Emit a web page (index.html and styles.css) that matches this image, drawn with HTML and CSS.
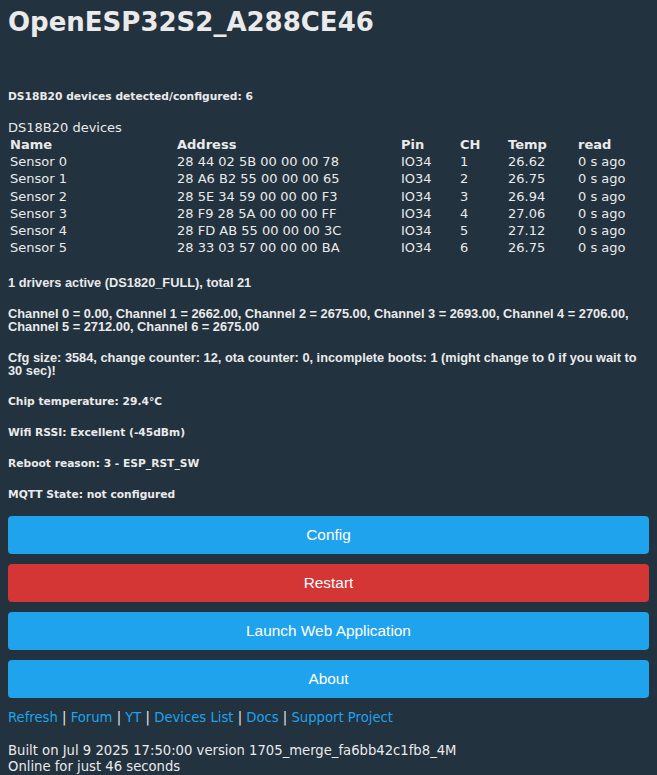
FILE: index.html
```html
<!DOCTYPE html>
<html lang="en">
<head>
    <meta charset="UTF-8">
    <meta name="viewport" content="width=device-width, initial-scale=1.0">
    <title>OpenESP32S2_A288CE46</title>
    <link rel="stylesheet" href="styles.css">
</head>
<body>
    <h1>OpenESP32S2_A288CE46</h1>
    <div id="state">
        <h5>DS18B20 devices detected/configured: 6</h5>
        <div class="ds-title">DS18B20 devices</div>
        <table class="ds-table">
            <tr>
                <th class="col-name">Name</th>
                <th class="col-addr">Address</th>
                <th class="col-pin">Pin</th>
                <th class="col-ch">CH</th>
                <th class="col-temp">Temp</th>
                <th>read</th>
            </tr>
            <tr><td>Sensor 0</td><td>28 44 02 5B 00 00 00 78</td><td>IO34</td><td>1</td><td>26.62</td><td>0 s ago</td></tr>
            <tr><td>Sensor 1</td><td>28 A6 B2 55 00 00 00 65</td><td>IO34</td><td>2</td><td>26.75</td><td>0 s ago</td></tr>
            <tr><td>Sensor 2</td><td>28 5E 34 59 00 00 00 F3</td><td>IO34</td><td>3</td><td>26.94</td><td>0 s ago</td></tr>
            <tr><td>Sensor 3</td><td>28 F9 28 5A 00 00 00 FF</td><td>IO34</td><td>4</td><td>27.06</td><td>0 s ago</td></tr>
            <tr><td>Sensor 4</td><td>28 FD AB 55 00 00 00 3C</td><td>IO34</td><td>5</td><td>27.12</td><td>0 s ago</td></tr>
            <tr><td>Sensor 5</td><td>28 33 03 57 00 00 00 BA</td><td>IO34</td><td>6</td><td>26.75</td><td>0 s ago</td></tr>
        </table>
        <h5 class="narrow">1 drivers active (DS1820_FULL), total 21</h5>
        <h5 class="narrow">Channel 0 = 0.00, Channel 1 = 2662.00, Channel 2 = 2675.00, Channel 3 = 2693.00, Channel 4 = 2706.00, Channel 5 = 2712.00, Channel 6 = 2675.00</h5>
        <h5 class="narrow">Cfg size: 3584, change counter: 12, ota counter: 0, incomplete boots: 1 (might change to 0 if you wait to 30 sec)!</h5>
        <h5>Chip temperature: 29.4&deg;C</h5>
        <h5>Wifi RSSI: Excellent (-45dBm)</h5>
        <h5>Reboot reason: 3 - ESP_RST_SW</h5>
        <h5>MQTT State: not configured</h5>
    </div>
    <div class="buttons">
        <button class="btn">Config</button>
        <button class="btn btn-red">Restart</button>
        <button class="btn">Launch Web Application</button>
        <button class="btn">About</button>
    </div>
    <div class="links">
        <a href="#">Refresh</a> | <a href="#">Forum</a> | <a href="#">YT</a> | <a href="#">Devices List</a> | <a href="#">Docs</a> | <a href="#">Support Project</a>
    </div>
    <div class="footer">
        Built on Jul 9 2025 17:50:00 version 1705_merge_fa6bb42c1fb8_4M<br>
        Online for just 46 seconds
    </div>
</body>
</html>
```

FILE: styles.css
```css
body {
    font-family: "DejaVu Sans", Verdana, sans-serif;
    background-color: #22323f;
    color: #eaeaea;
    margin: 0;
    padding: 0 8px;
}
h1 {
    font-size: 26px;
    margin: 0;
    padding-top: 6px;
    line-height: 32px;
}
h5 {
    font-size: 10.7px;
    margin: 0 0 17px 0;
    line-height: 14px;
}
#state {
    padding-top: 52px;
}
#state h5:last-child {
    margin-bottom: 14px;
}
h5.narrow {
    font-family: "Liberation Sans", Tahoma, sans-serif;
    font-size: 12.8px;
    line-height: 13px;
    margin-bottom: 18px;
}
.ds-title {
    font-size: 13px;
    margin-top: -1px;
    line-height: 16px;
}
.ds-table {
    width: 100%;
    border-collapse: collapse;
    font-size: 13px;
    margin-bottom: 20px;
}
.ds-table th,
.ds-table td {
    text-align: left;
    padding: 0 2px;
    line-height: 17.2px;
}
.col-name {
    width: 163px;
}
.col-addr {
    width: 220px;
}
.col-pin {
    width: 55px;
}
.col-ch {
    width: 44px;
}
.col-temp {
    width: 66px;
}
.buttons {
    display: flex;
    flex-direction: column;
    gap: 10px;
}
.btn {
    display: block;
    width: 100%;
    height: 38px;
    border: none;
    border-radius: 4px;
    background-color: #1fa3ec;
    color: #fff;
    font-family: "Liberation Sans", Arial, sans-serif;
    font-size: 15.4px;
    cursor: pointer;
}
.btn-red {
    background-color: #d43535;
}
.links {
    font-size: 13.2px;
    line-height: 16px;
    margin-top: 12px;
}
.links a {
    color: #1fa3ec;
    text-decoration: none;
}
.footer {
    font-size: 13.2px;
    margin-top: 17px;
    line-height: 16px;
}
```
